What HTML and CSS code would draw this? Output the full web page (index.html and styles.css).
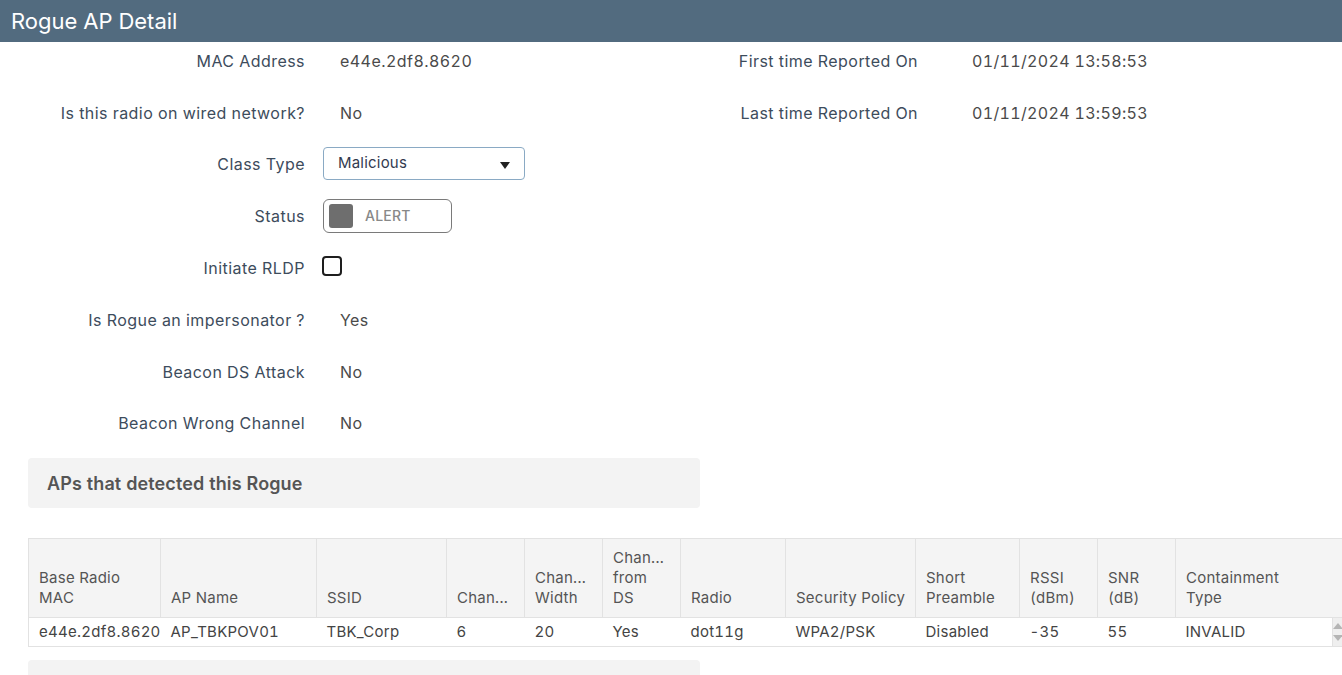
FILE: index.html
```html
<!DOCTYPE html>
<html lang="en">
<head>
<meta charset="utf-8">
<title>Rogue AP Detail</title>
<link rel="stylesheet" href="styles.css">
</head>
<body>
<div class="page">
  <header class="titlebar">Rogue AP Detail</header>
  <div class="viewport">
    <div class="content">
      <section class="top">
        <div class="form">
          <div class="lbl">MAC Address</div><div class="val txt">e44e.2df8.8620</div>
          <div class="lbl">Is this radio on wired network?</div><div class="val txt">No</div>
          <div class="lbl">Class Type</div>
          <div class="val">
            <div class="select"><span>Malicious</span><span class="caret"></span></div>
          </div>
          <div class="lbl">Status</div>
          <div class="val">
            <div class="toggle"><span class="knob"></span><span class="tlabel">ALERT</span></div>
          </div>
          <div class="lbl">Initiate RLDP</div>
          <div class="val"><span class="checkbox"></span></div>
          <div class="lbl">Is Rogue an impersonator ?</div><div class="val txt">Yes</div>
          <div class="lbl">Beacon DS Attack</div><div class="val txt">No</div>
          <div class="lbl">Beacon Wrong Channel</div><div class="val txt">No</div>
        </div>
        <div class="form right">
          <div class="lbl">First time Reported On</div><div class="val date">01/11/2024 13:58:53</div>
          <div class="lbl">Last time Reported On</div><div class="val date">01/11/2024 13:59:53</div>
        </div>
      </section>

      <div class="panel">APs that detected this Rogue</div>

      <div class="tablewrap">
        <table class="grid">
          <colgroup>
            <col style="width:132px"><col style="width:156px"><col style="width:130px"><col style="width:78px">
            <col style="width:78px"><col style="width:78px"><col style="width:105px"><col style="width:130px">
            <col style="width:104px"><col style="width:78px"><col style="width:78px"><col>
          </colgroup>
          <thead>
            <tr>
              <th>Base Radio<br>MAC</th>
              <th>AP Name</th>
              <th>SSID</th>
              <th>Chan...</th>
              <th>Chan...<br>Width</th>
              <th>Chan...<br>from<br>DS</th>
              <th>Radio</th>
              <th>Security Policy</th>
              <th>Short<br>Preamble</th>
              <th>RSSI<br>(dBm)</th>
              <th>SNR<br>(dB)</th>
              <th>Containment<br>Type</th>
            </tr>
          </thead>
          <tbody>
            <tr>
              <td>e44e.2df8.8620</td>
              <td>AP_TBKPOV01</td>
              <td>TBK_Corp</td>
              <td>6</td>
              <td>20</td>
              <td>Yes</td>
              <td>dot11g</td>
              <td>WPA2/PSK</td>
              <td>Disabled</td>
              <td>-35</td>
              <td>55</td>
              <td>INVALID</td>
            </tr>
          </tbody>
        </table>
        <div class="scroller"><span class="up"></span><span class="down"></span></div>
      </div>

      <div class="panel next"></div>
    </div>
  </div>
</div>
</body>
</html>
```
FILE: styles.css
```css
* { box-sizing: border-box; }
html, body { margin: 0; padding: 0; }
body {
  font-family: "Inter", "Liberation Sans", sans-serif;
  font-variant-numeric: tabular-nums;
  background: #fff;
  color: #444;
  width: 1342px;
  height: 675px;
  overflow: hidden;
}
.page { display: flex; flex-direction: column; height: 675px; }
.titlebar {
  position: relative;
  z-index: 2;
  height: 42px;
  flex: none;
  background: #526b7f;
  color: #fff;
  font-size: 22px;
  line-height: 42px;
  padding-left: 11px;
  letter-spacing: 0;
}
.viewport { flex: 1; overflow: hidden; }
.content { margin-top: -7px; }

.top { display: flex; }
.form {
  display: grid;
  grid-template-columns: 305px 1fr;
  grid-auto-rows: 51.8px;
  column-gap: 18px;
  width: 700px;
  font-size: 16px;
  letter-spacing: 0.45px;
}
.form .lbl {
  color: #3d4c5c;
  text-align: right;
  display: flex;
  align-items: center;
  justify-content: flex-end;
}
.form .val { display: flex; align-items: center; color: #4a4a4a; }
.form .val.txt { padding-left: 17px; }
.form .val.date { letter-spacing: 0.33px; }
.form.right {
  width: auto;
  grid-template-columns: 218px 1fr;
  column-gap: 54px;
}

.select {
  width: 202px;
  height: 33px;
  border: 1px solid #8aaac4;
  border-radius: 4px;
  display: flex;
  align-items: center;
  justify-content: space-between;
  padding: 0 14px 2px 14px;
  font-size: 15px;
  letter-spacing: 0.2px;
  color: #333a4f;
  margin-top: -2px;
}
.caret {
  width: 0; height: 0;
  border-left: 5px solid transparent;
  border-right: 5px solid transparent;
  border-top: 7px solid #222;
  margin-top: 6px;
}
.toggle {
  width: 129px;
  height: 34px;
  border: 1px solid #7a7a7a;
  border-radius: 6px;
  display: flex;
  align-items: center;
  padding-left: 5px;
  gap: 12px;
  margin-top: -1px;
}
.knob {
  width: 24px; height: 24px;
  background: #6e6e6e;
  border-radius: 3px;
}
.tlabel { color: #888; font-size: 14px; font-weight: 500; letter-spacing: 0.2px; }
.checkbox {
  width: 20px; height: 20px;
  border: 2px solid #1e1e1e;
  border-radius: 4px;
  margin-left: -1px;
  margin-top: -4px;
}

.panel {
  margin: 9px 0 0 28px;
  width: 672px;
  height: 50px;
  background: #f3f3f3;
  border-radius: 4px;
  font-size: 18px;
  font-weight: 600;
  letter-spacing: 0.1px;
  color: #555;
  padding-left: 19px;
  display: flex;
  align-items: center;
}
.panel.next { margin-top: 13px; height: 30px; border-radius: 4px 4px 0 0; }

.tablewrap { position: relative; margin: 30px 0 0 28px; }
.grid {
  border-collapse: collapse;
  table-layout: fixed;
  width: 1314px;
  font-size: 15px;
  letter-spacing: 0.25px;
}
.grid th {
  background: #f4f4f4;
  color: #555;
  font-weight: 400;
  text-align: left;
  vertical-align: bottom;
  line-height: 20px;
  padding: 8px 4px 9px 10px;
  height: 79px;
  border: 1px solid #e2e2e2;
  white-space: nowrap;
}
.grid th:last-child { border-right: none; }
.grid td {
  color: #444;
  padding: 0 4px 0 10px;
  height: 29px;
  line-height: 20px;
  border-top: 1px solid #e2e2e2;
  border-bottom: 1px solid #e2e2e2;
  white-space: nowrap;
}
.grid td:first-child { border-left: 1px solid #e2e2e2; }
.scroller {
  position: absolute;
  right: 0;
  bottom: 1px;
  width: 10px;
  height: 28px;
  background: #efefef;
  border-left: 1px solid #e2e2e2;
  display: flex;
  flex-direction: column;
  align-items: center;
  justify-content: center;
  gap: 6px;
}
.up, .down { width: 0; height: 0; border-left: 5px solid transparent; border-right: 5px solid transparent; }
.up { border-bottom: 6px solid #b5b5b5; }
.down { border-top: 6px solid #b5b5b5; }
```
